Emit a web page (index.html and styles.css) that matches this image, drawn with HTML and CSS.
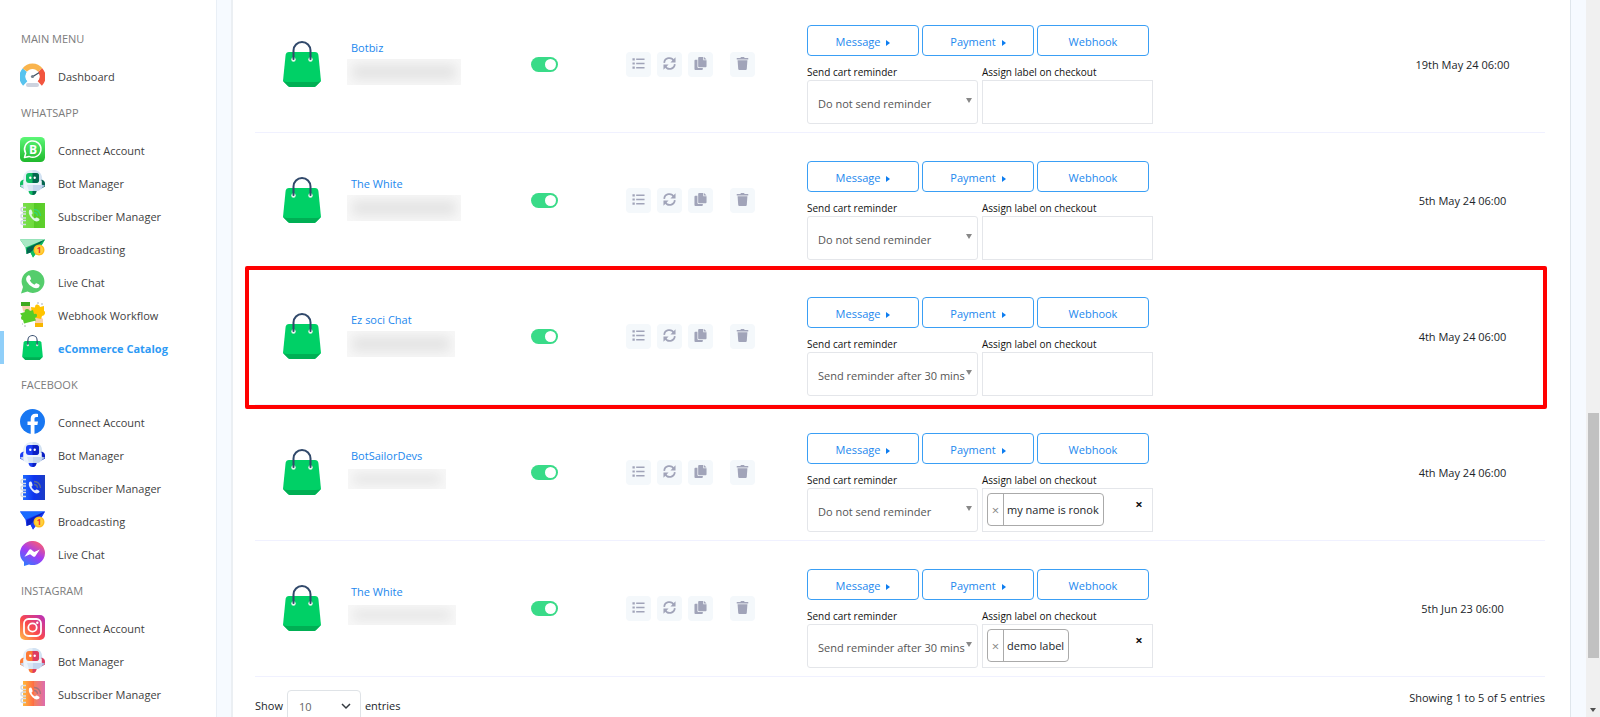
FILE: index.html
```html
<!DOCTYPE html>
<html lang="en">
<head>
  <meta charset="UTF-8" />
  <meta name="viewport" content="width=device-width, initial-scale=1.0"/>
  <title>eCommerce Catalog</title>
  <link rel="stylesheet" href="styles.css">
</head>
<body>
  <!-- shared icons -->
  <svg class="sprite" aria-hidden="true">
    <defs>
      <linearGradient id="wa" x1="0" y1="0" x2="0" y2="1"><stop offset="0" stop-color="#5cf777"/><stop offset="1" stop-color="#1fb82c"/></linearGradient>
      <linearGradient id="ig" x1="0" y1="1" x2="1" y2="0"><stop offset="0" stop-color="#ffc24a"/><stop offset=".45" stop-color="#fb4a4a"/><stop offset="1" stop-color="#b52fc0"/></linearGradient>
      <linearGradient id="ms" x1=".2" y1="1" x2=".8" y2="0"><stop offset="0" stop-color="#2b7dff"/><stop offset=".5" stop-color="#a23bf5"/><stop offset="1" stop-color="#ff5f6b"/></linearGradient>
      <linearGradient id="igbook" x1="0" y1="0" x2="1" y2="0"><stop offset="0" stop-color="#ffb83a"/><stop offset=".5" stop-color="#ff6a45"/><stop offset=".52" stop-color="#f2805f"/><stop offset="1" stop-color="#dd6cae"/></linearGradient>
      <linearGradient id="fbbook" x1="0" y1="0" x2="1" y2="0"><stop offset="0" stop-color="#1f6bff"/><stop offset=".5" stop-color="#0e33ee"/><stop offset="1" stop-color="#1b3cc4"/></linearGradient>
      <linearGradient id="wabook" x1="0" y1="0" x2="1" y2="0"><stop offset="0" stop-color="#7ade4c"/><stop offset=".49" stop-color="#6edb3c"/><stop offset=".5" stop-color="#55c926"/><stop offset="1" stop-color="#5fd02d"/></linearGradient>
    </defs>
    <symbol id="bag" viewBox="0 0 38 46">
      <path d="M6 11h26q3 0 3.400 3L38 40l-6 6H6l-6-6L2.600 14Q3 11 6 11z" fill="#00d066"/>
      <path d="M0 40q2 1 5 1h28q3 0 5-1l-5 5q-1 1-3 1H8q-2 0-3-1z" fill="#00af54"/>
      <circle cx="10.500" cy="18.500" r="2.200" fill="#e9f7ee"/><circle cx="27.500" cy="18.500" r="2.200" fill="#e9f7ee"/>
      <path d="M10.500 18V9.500a8.500 8.500 0 0 1 17 0V18" fill="none" stroke="#31496b" stroke-width="2" stroke-linecap="round"/>
    </symbol>
    <symbol id="bot" viewBox="0 0 25 25">
      <path d="M2.500 11Q3 1.500 10 0h5q7 1.500 7.500 11z" fill="#e6eff8"/><path d="M12.500 0H15q7 1.500 7.500 11h-10z" fill="#d3e2f2"/>
      <path d="M3.500 9.500v9L0 16.500v-3q0-3 3.500-4z" fill="var(--a)"/><path d="M21.500 9.500v9l3.500-2v-3q0-3-3.500-4z" fill="var(--b)"/>
      <path d="M0 15.500l4-1v4.500z" fill="#c4d5ec"/><path d="M25 15.500l-4-1v4.500z" fill="#a9c0e4"/>
      <path d="M3.500 11h18v5q0 5-5 5h-8q-5 0-5-5z" fill="#edf4fb"/>
      <path d="M12.500 15h9v1q0 5-5 5h-4z" fill="#c5d6ee"/><path d="M7 15h5.500v6H9z" fill="#dae6f4"/>
      <rect x="6" y="3" width="13" height="10" rx="3" fill="var(--a)"/><path d="M12.500 3H16q3 0 3 3v4q0 3-3 3h-3.500z" fill="var(--b)"/>
      <circle cx="10.300" cy="7.700" r="1.200" fill="#fff"/><circle cx="14.700" cy="7.700" r="1.200" fill="#fff"/>
      <path d="M8.500 21h8q-.5 4-4 4t-4-4z" fill="var(--a)"/><path d="M12.500 21h4q-.5 4-4 4z" fill="var(--b)"/>
    </symbol>
    <symbol id="book" viewBox="0 0 25 25">
      <rect x="3" y="0" width="22" height="25" fill="var(--book)"/>
      <g fill="none" stroke="#d5dde6" stroke-width="1.500"><path d="M6 4.500H3a2 2 0 0 0 0 4h3M6 11H3a2 2 0 0 0 0 4h3M6 17.500H3a2 2 0 0 0 0 4h3"/></g>
      <path d="M9 7.500q2-2 3 .5l.6 2q0 1-1.200 1.700 1 2.600 3.600 3.700 1-1.200 2-.8l1.800.8q1.700 1.200-.5 2.700-2.500 1.200-5.800-1.900Q8 11.500 9 7.500z" fill="var(--phone)"/>
      <path d="M14 9.500q3.200 0 3.500 3.500M14 6.500q6 .3 6.500 6.500" fill="none" stroke="var(--wave)" stroke-width="1.300"/>
    </symbol>
    <symbol id="plane" viewBox="0 0 25 25">
      <path d="M0 3.500h25l-6 10-6 8-2.500-5L6.500 18l-1-6.500z" fill="var(--a)"/>
      <path d="M0 3.500h25L5.500 11.500z" fill="var(--c)"/><path d="M25 3.500 10.500 16.500l-4 1.500.5-6z" fill="var(--b)"/><path d="M10.500 16.500 25 3.500l-6 10-6 8z" fill="var(--a)"/>
      <circle cx="19" cy="14" r="5.500" fill="#ffbd1f"/><circle cx="19" cy="14" r="4" fill="#ffd23f"/>
      <text x="19" y="17" text-anchor="middle" font-size="8" font-weight="700" fill="#f2352c">1</text>
    </symbol>
    <symbol id="gauge" viewBox="0 0 25 25">
      <g fill="none" stroke-width="6"><path d="M5.200 20.500A9.500 9.500 0 0 1 5 7.200" stroke="#58c3ee"/><path d="M5 7.200a9.500 9.500 0 0 1 15 0" stroke="#f9b44d"/><path d="M20 7.200a9.500 9.500 0 0 1-.2 13.300" stroke="#f2553f"/></g>
      <circle cx="12.500" cy="13" r="7" fill="#fff"/><path d="M12 14 19 9.800" stroke="#3d4f60" stroke-width="1.300"/><circle cx="12.500" cy="13.500" r="1.600" fill="#73818e"/>
      <rect x="6" y="20" width="13" height="4" rx="2" fill="#cdd3df"/>
    </symbol>
    <symbol id="wabiz" viewBox="0 0 25 25">
      <rect width="25" height="25" rx="4.500" fill="url(#wa)"/>
      <path d="M4.500 20.500 5.700 16.300A8.200 8.200 0 1 1 9 19.400z" fill="none" stroke="#fff" stroke-width="1.500" stroke-linejoin="round"/>
      <text x="13" y="16.500" text-anchor="middle" font-size="12" font-weight="700" fill="#fff">B</text>
    </symbol>
    <symbol id="whatsapp" viewBox="0 0 25 25">
      <path d="M1 24.500 3 18A11.400 11.400 0 1 1 7.500 22.500z" fill="#55cd6c"/>
      <path d="M8 6.500q1.300-.8 2 .5l1 2.400q.2 1-1.200 2.200 1.600 3 4.600 4.100 1.300-1.900 2.100-1.500l2.700 1.300q1.300 1-.5 3-2.200 1.500-5.500.1-4.200-1.800-6.500-6Q5 9 8 6.500z" fill="#fff"/>
    </symbol>
    <symbol id="puzzle" viewBox="0 0 25 25">
      <path d="M1 0h9v4H1z" fill="#3faa20"/><path d="M2 4h8l1 5-5 2-3-2z" fill="#f8cfae"/>
      <path d="M15 25h8v-4h-8z" fill="#f7b500"/><path d="M15 21v-5l4-2 4 3v4z" fill="#f8cfae"/>
      <path d="M11 5l4 .5q0-3.500 2.500-3T20 5l4-1v5q1.500.5 1 2.500T22 14l-1 3-9-2z" fill="#ffc400"/>
      <path d="M0 11.500l5-1.500q-1-2.500 1.500-3T10 9l3-1 1 4q2.500-1 3 1t-2 3l1 2.500L4 21.500 3 18q-2 0-2-2t1-2z" fill="#55cc28"/>
      <path d="M17 1h2M21 2h2M2 22h1M4 24h2" stroke="#aab2bb"/>
    </symbol>
    <symbol id="facebook" viewBox="0 0 25 25">
      <circle cx="12.500" cy="12.500" r="12.500" fill="#1877f2"/>
      <path d="M10.700 25v-9H7.500v-3.600h3.200V9.600c0-3.200 1.900-4.900 4.700-4.900 1.400 0 2.600.2 2.600.2V8h-1.500c-1.600 0-2 1-2 1.900v2.500H18l-.6 3.600h-2.900v9z" fill="#fff"/>
    </symbol>
    <symbol id="messenger" viewBox="0 0 25 25">
      <path d="M12.500 0A12.200 12.200 0 0 1 25 12 12.200 12.200 0 0 1 9 23.500L4 25v-4A12 12 0 0 1 0 12 12.200 12.200 0 0 1 12.500 0z" fill="url(#ms)"/>
      <path d="M4.500 15.700 9 8.900q1-1 2.200-.3l3 2.300 5.600-2.400-4.500 6.700q-1 1-2.200.3l-3-2.300z" fill="#fff"/>
    </symbol>
    <symbol id="instagram" viewBox="0 0 25 25">
      <rect width="25" height="25" rx="5" fill="url(#ig)"/>
      <g fill="none" stroke="#fff" stroke-width="1.800"><rect x="4" y="4" width="17" height="17" rx="4.500"/><circle cx="12.500" cy="12.500" r="4.200"/></g><circle cx="17.300" cy="7.700" r="1.200" fill="#fff"/>
    </symbol>
    <symbol id="list" viewBox="0 0 14 14"><path d="M.5 1.300h2.500v2.400H.5zM.5 5.800h2.500v2.400H.5zM.5 10.300h2.500v2.400H.5zM4.500 1.700h9v1.600h-9zM4.500 6.200h9v1.600h-9zM4.500 10.700h9v1.600h-9z"/></symbol>
    <symbol id="sync" viewBox="0 0 14 14"><path d="M1.300 6.300A5.500 5.500 0 0 1 11.600 4M12.700 7.700A5.500 5.500 0 0 1 2.400 10" fill="none" stroke="currentColor" stroke-width="1.900"/><path d="M13.500.3v5.700H8zM.5 13.700V8h5.500z"/></symbol>
    <symbol id="copy" viewBox="0 0 14 14"><path d="M5.500 0H10v3.500h3.500V10a1 1 0 0 1-1 1h-7a1 1 0 0 1-1-1V1a1 1 0 0 1 1-1zM10.800 0l2.700 2.700h-2.700z"/><path d="M3.700 3H1.500a1 1 0 0 0-1 1v9a1 1 0 0 0 1 1h7a1 1 0 0 0 1-1v-1.200H5A1.300 1.300 0 0 1 3.700 10.500z"/></symbol>
    <symbol id="trash" viewBox="0 0 14 14"><path d="M.8 1h3.800l.8-1h3.200l.8 1h3.800v1.600H.8zM1.700 3.400h10.600L11.600 13q-.1 1-1.100 1h-7q-1 0-1.100-1z"/></symbol>
  </svg>

  <div class="layout">
    <nav class="sidebar">
      <h2 class="menu-title">Main Menu</h2>
      <a class="menu-item" href="#"><svg><use href="#gauge"/></svg><span>Dashboard</span></a>

      <h2 class="menu-title">WhatsApp</h2>
      <div class="green">
        <a class="menu-item" href="#"><svg><use href="#wabiz"/></svg><span>Connect Account</span></a>
        <a class="menu-item" href="#"><svg><use href="#bot"/></svg><span>Bot Manager</span></a>
        <a class="menu-item" href="#"><svg><use href="#book"/></svg><span>Subscriber Manager</span></a>
        <a class="menu-item" href="#"><svg><use href="#plane"/></svg><span>Broadcasting</span></a>
        <a class="menu-item" href="#"><svg><use href="#whatsapp"/></svg><span>Live Chat</span></a>
        <a class="menu-item" href="#"><svg><use href="#puzzle"/></svg><span>Webhook Workflow</span></a>
        <a class="menu-item active" href="#"><svg><use href="#bag"/></svg><span>eCommerce Catalog</span></a>
      </div>

      <h2 class="menu-title">Facebook</h2>
      <div class="blue">
        <a class="menu-item" href="#"><svg><use href="#facebook"/></svg><span>Connect Account</span></a>
        <a class="menu-item" href="#"><svg><use href="#bot"/></svg><span>Bot Manager</span></a>
        <a class="menu-item" href="#"><svg><use href="#book"/></svg><span>Subscriber Manager</span></a>
        <a class="menu-item" href="#"><svg><use href="#plane"/></svg><span>Broadcasting</span></a>
        <a class="menu-item" href="#"><svg><use href="#messenger"/></svg><span>Live Chat</span></a>
      </div>

      <h2 class="menu-title">Instagram</h2>
      <div class="orange">
        <a class="menu-item" href="#"><svg><use href="#instagram"/></svg><span>Connect Account</span></a>
        <a class="menu-item" href="#"><svg><use href="#bot"/></svg><span>Bot Manager</span></a>
        <a class="menu-item" href="#"><svg><use href="#book"/></svg><span>Subscriber Manager</span></a>
      </div>
    </nav>

    <main class="card">
      <table class="catalog">
        <colgroup>
          <col class="col-image"><col class="col-name"><col class="col-status"><col class="col-actions"><col><col class="col-date">
        </colgroup>
        <tbody>
          <tr>
            <td class="image"><svg class="bag"><use href="#bag"/></svg></td>
            <td><a class="name" href="#">Botbiz</a><div class="hidden-id"></div></td>
            <td><input class="switch" type="checkbox" aria-label="Status" checked></td>
            <td>
              <div class="actions">
                <button aria-label="Orders"><svg><use href="#list"/></svg></button>
                <button aria-label="Sync"><svg><use href="#sync"/></svg></button>
                <button aria-label="Copy"><svg><use href="#copy"/></svg></button>
                <button class="delete" aria-label="Delete"><svg><use href="#trash"/></svg></button>
              </div>
            </td>
            <td class="settings">
              <div class="buttons"><button class="caret">Message</button><button class="caret">Payment</button><button>Webhook</button></div>
              <div class="fields">
                <div class="field">
                  <label for="reminder1">Send cart reminder</label>
                  <div class="select"><select id="reminder1"><option>Do not send reminder</option><option>Send reminder after 30 mins</option></select></div>
                </div>
                <div class="field">
                  <label for="labels1">Assign label on checkout</label>
                  <div class="tags"><input id="labels1" type="text"></div>
                </div>
              </div>
            </td>
            <td class="date">19th May 24 06:00</td>
          </tr>
          <tr>
            <td class="image"><svg class="bag"><use href="#bag"/></svg></td>
            <td><a class="name" href="#">The White</a><div class="hidden-id"></div></td>
            <td><input class="switch" type="checkbox" aria-label="Status" checked></td>
            <td>
              <div class="actions">
                <button aria-label="Orders"><svg><use href="#list"/></svg></button>
                <button aria-label="Sync"><svg><use href="#sync"/></svg></button>
                <button aria-label="Copy"><svg><use href="#copy"/></svg></button>
                <button class="delete" aria-label="Delete"><svg><use href="#trash"/></svg></button>
              </div>
            </td>
            <td class="settings">
              <div class="buttons"><button class="caret">Message</button><button class="caret">Payment</button><button>Webhook</button></div>
              <div class="fields">
                <div class="field">
                  <label for="reminder2">Send cart reminder</label>
                  <div class="select"><select id="reminder2"><option>Do not send reminder</option><option>Send reminder after 30 mins</option></select></div>
                </div>
                <div class="field">
                  <label for="labels2">Assign label on checkout</label>
                  <div class="tags"><input id="labels2" type="text"></div>
                </div>
              </div>
            </td>
            <td class="date">5th May 24 06:00</td>
          </tr>
          <tr class="highlight">
            <td class="image"><svg class="bag"><use href="#bag"/></svg></td>
            <td><a class="name" href="#">Ez soci Chat</a><div class="hidden-id medium"></div></td>
            <td><input class="switch" type="checkbox" aria-label="Status" checked></td>
            <td>
              <div class="actions">
                <button aria-label="Orders"><svg><use href="#list"/></svg></button>
                <button aria-label="Sync"><svg><use href="#sync"/></svg></button>
                <button aria-label="Copy"><svg><use href="#copy"/></svg></button>
                <button class="delete" aria-label="Delete"><svg><use href="#trash"/></svg></button>
              </div>
            </td>
            <td class="settings">
              <div class="buttons"><button class="caret">Message</button><button class="caret">Payment</button><button>Webhook</button></div>
              <div class="fields">
                <div class="field">
                  <label for="reminder3">Send cart reminder</label>
                  <div class="select"><select id="reminder3"><option>Do not send reminder</option><option selected>Send reminder after 30 mins</option></select></div>
                </div>
                <div class="field">
                  <label for="labels3">Assign label on checkout</label>
                  <div class="tags"><input id="labels3" type="text"></div>
                </div>
              </div>
            </td>
            <td class="date">4th May 24 06:00</td>
          </tr>
          <tr>
            <td class="image"><svg class="bag"><use href="#bag"/></svg></td>
            <td><a class="name" href="#">BotSailorDevs</a><div class="hidden-id small short"></div></td>
            <td><input class="switch" type="checkbox" aria-label="Status" checked></td>
            <td>
              <div class="actions">
                <button aria-label="Orders"><svg><use href="#list"/></svg></button>
                <button aria-label="Sync"><svg><use href="#sync"/></svg></button>
                <button aria-label="Copy"><svg><use href="#copy"/></svg></button>
                <button class="delete" aria-label="Delete"><svg><use href="#trash"/></svg></button>
              </div>
            </td>
            <td class="settings">
              <div class="buttons"><button class="caret">Message</button><button class="caret">Payment</button><button>Webhook</button></div>
              <div class="fields">
                <div class="field">
                  <label for="reminder4">Send cart reminder</label>
                  <div class="select"><select id="reminder4"><option>Do not send reminder</option><option>Send reminder after 30 mins</option></select></div>
                </div>
                <div class="field">
                  <label for="labels4">Assign label on checkout</label>
                  <div class="tags"><span class="tag"><button aria-label="Remove label">×</button><span>my name is ronok</span></span><input id="labels4" type="text"><button class="clear" aria-label="Clear all">×</button></div>
                </div>
              </div>
            </td>
            <td class="date">4th May 24 06:00</td>
          </tr>
          <tr>
            <td class="image"><svg class="bag"><use href="#bag"/></svg></td>
            <td><a class="name" href="#">The White</a><div class="hidden-id medium short"></div></td>
            <td><input class="switch" type="checkbox" aria-label="Status" checked></td>
            <td>
              <div class="actions">
                <button aria-label="Orders"><svg><use href="#list"/></svg></button>
                <button aria-label="Sync"><svg><use href="#sync"/></svg></button>
                <button aria-label="Copy"><svg><use href="#copy"/></svg></button>
                <button class="delete" aria-label="Delete"><svg><use href="#trash"/></svg></button>
              </div>
            </td>
            <td class="settings">
              <div class="buttons"><button class="caret">Message</button><button class="caret">Payment</button><button>Webhook</button></div>
              <div class="fields">
                <div class="field">
                  <label for="reminder5">Send cart reminder</label>
                  <div class="select"><select id="reminder5"><option>Do not send reminder</option><option selected>Send reminder after 30 mins</option></select></div>
                </div>
                <div class="field">
                  <label for="labels5">Assign label on checkout</label>
                  <div class="tags"><span class="tag"><button aria-label="Remove label">×</button><span>demo label</span></span><input id="labels5" type="text"><button class="clear" aria-label="Clear all">×</button></div>
                </div>
              </div>
            </td>
            <td class="date">5th Jun 23 06:00</td>
          </tr>
        </tbody>
      </table>

      <div class="table-footer">
        <div class="length">
          <label for="length">Show</label>
          <div class="length-select">
            <select id="length"><option>10</option><option>25</option><option>50</option></select>
            <svg viewBox="0 0 10 6"><path d="M1 1l4 4 4-4"/></svg>
          </div>
          <span>entries</span>
        </div>
        <div class="info">Showing 1 to 5 of 5 entries</div>
      </div>
    </main>

    <div class="scrollbar" aria-hidden="true"><div class="thumb"></div><div class="arrow"></div></div>
  </div>
</body>
</html>
```
FILE: styles.css
```css
* {
  box-sizing: border-box;
}
body {
  margin: 0;
  height: 100vh;
  overflow: hidden;
  font-family: "Open Sans", sans-serif;
  font-size: 11px;
  line-height: 20px;
  color: #212529;
  background: #f6faff;
}
button, input, select {
  font-family: inherit;
  font-size: inherit;
  margin: 0;
}
a {
  text-decoration: none;
}
.sprite {
  position: absolute;
  width: 0;
  height: 0;
}
.layout {
  display: flex;
  height: 100vh;
}

/* sidebar */
.sidebar {
  flex: 0 0 217px;
  padding-top: 18px;
  overflow: hidden;
  background: #fff;
  border-right: 1px solid #e9eff6;
}
.menu-title {
  margin: 0;
  padding-left: 21px;
  font-size: 11px;
  line-height: 41px;
  font-weight: 500;
  text-transform: uppercase;
  color: #7c7c7c;
}
.menu-item {
  display: flex;
  align-items: center;
  gap: 13px;
  height: 33px;
  padding-left: 16px;
  border-left: 4px solid transparent;
  font-weight: 500;
  color: #3f3f3f;
}
.menu-item svg {
  width: 25px;
  height: 25px;
}
.menu-item span {
  padding-top: 2px;
}
.menu-item.active {
  border-left-color: #90cff9;
  font-weight: 700;
  color: #2d9af5;
}
.green {
  --a: #10bd63;
  --b: #04664f;
  --c: #a8e8c4;
  --book: url(#wabook);
  --phone: #dff7e6;
  --wave: #35d673;
}
.blue {
  --a: #1a3df5;
  --b: #0a1fc4;
  --c: #1b6bff;
  --book: url(#fbbook);
  --phone: #e8eefc;
  --wave: #5a6a94;
}
.orange {
  --a: #fd7a35;
  --b: #dd3c62;
  --c: #ffb83a;
  --book: url(#igbook);
  --phone: #fff;
  --wave: #a5737d;
}

/* table */
.card {
  flex: 1;
  margin: 0 15px 0 14px;
  padding: 0 25px 0 22px;
  background: #fff;
  border-left: 2px solid #ebeff3;
  border-right: 1px solid #dfe6ec;
}
.catalog {
  width: 100%;
  margin-top: -3px;
  table-layout: fixed;
  border-collapse: separate;
  border-spacing: 0;
}
.catalog td {
  padding: 0;
  vertical-align: middle;
  border-bottom: 1px solid #f0f1ff;
}
.col-image {
  width: 96px;
}
.col-name {
  width: 180px;
}
.col-status {
  width: 95px;
}
.col-actions {
  width: 181px;
}
.col-date {
  width: 165px;
}
.catalog .image {
  padding: 0 0 2px 28px;
}
.bag {
  display: block;
  width: 38px;
  height: 46px;
}
.name {
  display: block;
  color: #2388ee;
}
/* blurred out account id */
.hidden-id {
  width: 114px;
  height: 26px;
  margin: 1px 0 6px -4px;
  background: #e4e4e4;
  box-shadow: inset 0 0 12px 5px #f8f8f8;
}
.hidden-id.medium {
  width: 108px;
}
.hidden-id.small {
  width: 98px;
}
.hidden-id.short {
  height: 20px;
  margin: 3px 0 10px -3px;
}
.switch {
  display: block;
  appearance: none;
  width: 27px;
  height: 15px;
  padding: 2px;
  border-radius: 8px;
  background: #c9ced6;
}
.switch::before {
  content: "";
  display: block;
  width: 11px;
  height: 11px;
  border-radius: 50%;
  background: #fff;
}
.switch:checked {
  background: #39db88;
}
.switch:checked::before {
  margin-left: 12px;
}
.actions {
  display: flex;
  gap: 6px;
}
.actions button {
  display: flex;
  align-items: center;
  justify-content: center;
  width: 25px;
  height: 25px;
  padding: 0 0 2px;
  border: none;
  border-radius: 4px;
  background: #f4f8fb;
  color: #a1a4b9;
}
.actions svg {
  width: 13px;
  height: 13px;
  fill: currentColor;
}
.actions .delete {
  margin-left: 11px;
}
.catalog .settings {
  padding: 28px 0 8px;
}
.buttons {
  display: flex;
  gap: 3px;
  margin-bottom: 8px;
}
.buttons button {
  width: 112px;
  height: 31px;
  padding: 2px 0 0;
  border: 1px solid #3a9ff5;
  border-radius: 4px;
  background: #fff;
  color: #2388ee;
}
.caret::after {
  content: "";
  display: inline-block;
  margin-left: 6px;
  border: 3px solid transparent;
  border-left: 4px solid #0d7df0;
  border-right: none;
}
.fields {
  display: flex;
  gap: 4px;
}
.field {
  width: 171px;
}
.field label {
  display: block;
  font-size: 10px;
  line-height: 16px;
  color: #111;
}
.select {
  position: relative;
}
.select select {
  display: block;
  appearance: none;
  width: 100%;
  height: 44px;
  padding: 2px 0 0 10px;
  border: 1px solid #e4e6ea;
  border-radius: 3px;
  background: #fff;
  color: #555;
}
.select::after {
  content: "";
  position: absolute;
  top: 18px;
  right: 6px;
  border: 3px solid transparent;
  border-top: 5px solid #888;
  border-bottom: none;
}
.tags {
  display: flex;
  align-items: flex-start;
  height: 44px;
  padding: 4px;
  border: 1px solid #e4e6ea;
}
.tags input {
  flex: 1;
  min-width: 0;
  height: 32px;
  padding: 0;
  border: none;
  outline: none;
  background: none;
}
.tag {
  display: flex;
  height: 33px;
  line-height: 31px;
  border: 1px solid #aaa;
  border-radius: 4px;
  white-space: nowrap;
}
.tag button {
  width: 16px;
  padding: 0;
  border: none;
  border-right: 1px solid #aaa;
  background: none;
  font-size: 13px;
  color: #888;
}
.tag span {
  padding: 0 4px 0 3px;
}
.clear {
  width: 16px;
  height: 20px;
  padding: 0;
  margin: 1px 1px 0 0;
  border: none;
  background: none;
  font-size: 13px;
  font-weight: 700;
  color: #111;
}
.date {
  text-align: center;
}
.highlight {
  position: relative;
}
.highlight .image::after {
  content: "";
  position: absolute;
  inset: -3px -2px -4px -10px;
  border: 4px solid #f00;
  border-radius: 2px;
  pointer-events: none;
}

/* footer */
.table-footer {
  display: flex;
  justify-content: space-between;
  padding-top: 11px;
}
.length {
  display: flex;
  align-items: center;
  gap: 4px;
  height: 36px;
}
.length-select {
  position: relative;
}
.length-select select {
  appearance: none;
  width: 74px;
  height: 32px;
  padding: 0 11px;
  border: 1px solid #dfe3e7;
  border-radius: 4px;
  background: #fff;
  color: #666;
}
.length-select svg {
  position: absolute;
  top: 13px;
  right: 10px;
  width: 10px;
  height: 6px;
  fill: none;
  stroke: #343a40;
  stroke-width: 1.5;
  overflow: visible;
}

/* scroll track */
.scrollbar {
  display: flex;
  flex-direction: column;
  align-items: center;
  justify-content: flex-end;
  flex: 0 0 14px;
  background: #f0f0f0;
}
.thumb {
  width: 11px;
  height: 245px;
  background: #c1c1c1;
}
.arrow {
  margin: 50px 0 5px;
  border: 3px solid transparent;
  border-top: 4px solid #505050;
  border-bottom: none;
}
```
